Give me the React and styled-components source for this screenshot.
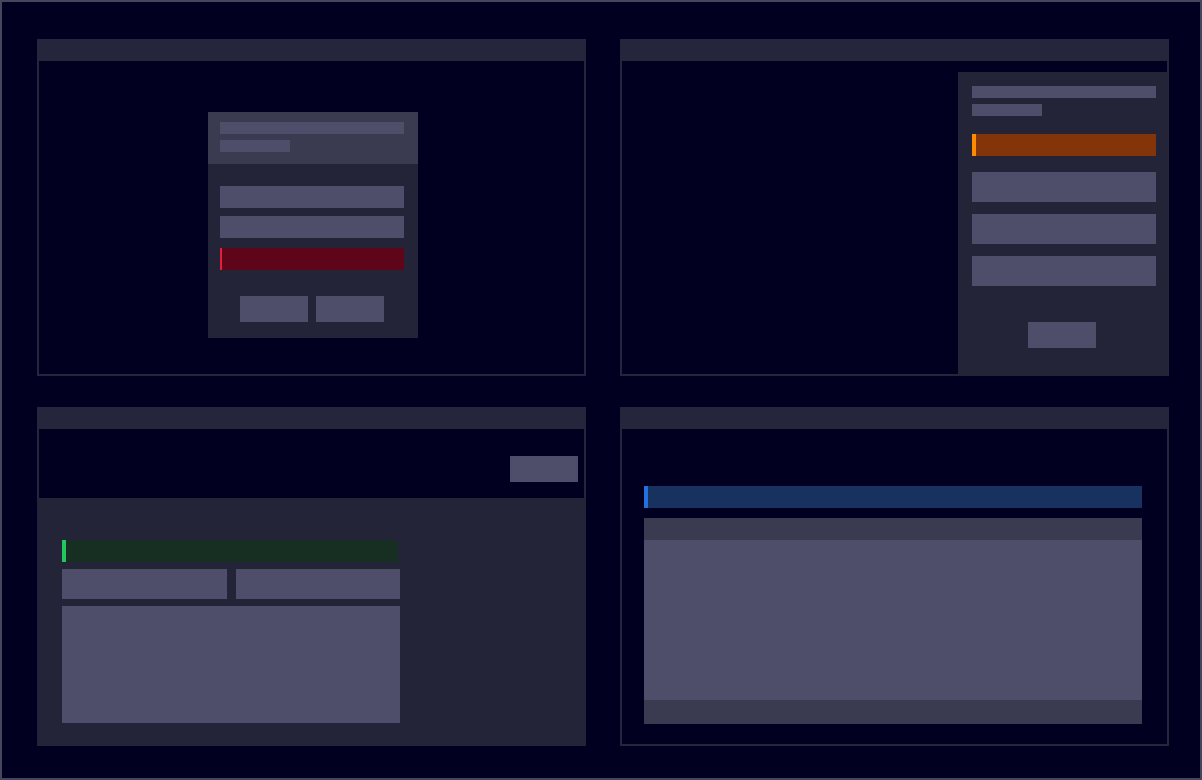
import styled, { createGlobalStyle } from 'styled-components';

const GlobalStyle = createGlobalStyle`
  * { box-sizing: border-box; }
  html, body {
    margin: 0;
    padding: 0;
    background: #020020;
    font-family: "Liberation Sans", Arial, sans-serif;
  }
`;

const Page = styled.div`
  width: 1202px;
  height: 780px;
  border: 2px solid #45455c;
  background: #020020;
  padding: 37px 31px 32px 35px;
  display: grid;
  grid-template-columns: 549px 549px;
  grid-template-rows: 337px 339px;
  column-gap: 34px;
  row-gap: 31px;
`;

const Panel = styled.section`
  position: relative;
  display: flex;
  flex-direction: column;
  border: 2px solid #25253b;
  background: #020020;
`;

const TitleBar = styled.div`
  height: 20px;
  flex-shrink: 0;
  background: #25253b;
`;

const Body = styled.div`
  flex: 1;
  display: flex;
  flex-direction: column;
  align-items: ${p => p.$align || 'stretch'};
  padding: ${p => p.$pad || '0'};
`;

const Skeleton = styled.div`
  height: ${p => p.$h || 30}px;
  width: ${p => (p.$w ? `${p.$w}px` : '100%')};
  background: ${p => p.$bg || '#4e4e6a'};
  flex-shrink: 0;
`;

const Alert = styled.div`
  height: 22px;
  width: ${p => (p.$w ? `${p.$w}px` : '100%')};
  background: ${p => p.$fill};
  border-left: ${p => p.$edge || 4}px solid ${p => p.$accent};
  flex-shrink: 0;
`;

const Stack = styled.div`
  display: flex;
  flex-direction: column;
  gap: ${p => p.$gap || 6}px;
`;

const Spacer = styled.div`
  height: ${p => p.$h}px;
  flex-shrink: 0;
`;

const Button = styled.div`
  width: 68px;
  height: 26px;
  background: #4e4e6a;
`;

/* modal dialog */
const Dialog = styled.div`
  width: 210px;
  height: 226px;
  margin-left: 2px;
  background: #242439;
  display: flex;
  flex-direction: column;
`;

const DialogHead = styled.div`
  height: 52px;
  padding: 10px 14px 0 12px;
  background: #3a3a50;
  display: flex;
  flex-direction: column;
  gap: 6px;
`;

const DialogBody = styled.div`
  padding: 22px 14px 0 12px;
  display: flex;
  flex-direction: column;
`;

const ButtonRow = styled.div`
  display: flex;
  justify-content: center;
  gap: 8px;
  margin-top: ${p => p.$top || 26}px;
  padding-right: ${p => p.$shift || 0}px;
`;

/* side drawer */
const Drawer = styled.aside`
  position: absolute;
  top: 31px;
  right: -1px;
  bottom: -2px;
  width: 210px;
  background: #242439;
  padding: 14px 12px 0 14px;
  display: flex;
  flex-direction: column;
`;

/* bottom sheet */
const TopBar = styled.div`
  height: 69px;
  display: flex;
  justify-content: flex-end;
  padding: 27px 6px 0 0;
`;

const Sheet = styled.div`
  position: absolute;
  left: -2px;
  right: -2px;
  bottom: -2px;
  top: 89px;
  background: #242439;
  padding: 42px 0 0 25px;
  display: flex;
  flex-direction: column;
`;

const FieldRow = styled.div`
  display: flex;
  gap: 9px;
  width: 338px;
  margin: 7px 0;
`;

const Table = styled.div`
  margin-top: 10px;
  display: flex;
  flex-direction: column;
`;

export default function App() {
  return (
    <>
      <GlobalStyle />
      <Page>
        <Panel>
          <TitleBar />
          <Body $align="center" $pad="51px 0 0 0">
            <Dialog>
              <DialogHead>
                <Skeleton $h={12} />
                <Skeleton $h={12} $w={70} />
              </DialogHead>
              <DialogBody>
                <Stack $gap={8}>
                  <Skeleton $h={22} />
                  <Skeleton $h={22} />
                </Stack>
                <Spacer $h={10} />
                <Alert $accent="#e3203c" $fill="#5e0519" $edge={2} />
                <ButtonRow>
                  <Button />
                  <Button />
                </ButtonRow>
              </DialogBody>
            </Dialog>
          </Body>
        </Panel>

        <Panel>
          <TitleBar />
          <Body />
          <Drawer>
            <Stack $gap={6}>
              <Skeleton $h={12} />
              <Skeleton $h={12} $w={70} />
            </Stack>
            <Spacer $h={18} />
            <Alert $accent="#ff8a00" $fill="#833509" />
            <Spacer $h={16} />
            <Stack $gap={12}>
              <Skeleton $h={30} />
              <Skeleton $h={30} />
              <Skeleton $h={30} />
            </Stack>
            <ButtonRow $top={36} $shift={4}>
              <Button />
            </ButtonRow>
          </Drawer>
        </Panel>

        <Panel>
          <TitleBar />
          <TopBar>
            <Button />
          </TopBar>
          <Sheet>
            <Alert $accent="#22c55e" $fill="#172f22" $w={336} />
            <FieldRow>
              <Skeleton $h={30} $w={165} />
              <Skeleton $h={30} $w={164} />
            </FieldRow>
            <Skeleton $h={117} $w={338} />
          </Sheet>
        </Panel>

        <Panel>
          <TitleBar />
          <Body $pad="57px 25px 0 22px">
            <Alert $accent="#2370e0" $fill="#17325e" />
            <Table>
              <Skeleton $h={22} $bg="#3a3a50" />
              <Skeleton $h={160} />
              <Skeleton $h={24} $bg="#3a3a50" />
            </Table>
          </Body>
        </Panel>
      </Page>
    </>
  );
}
